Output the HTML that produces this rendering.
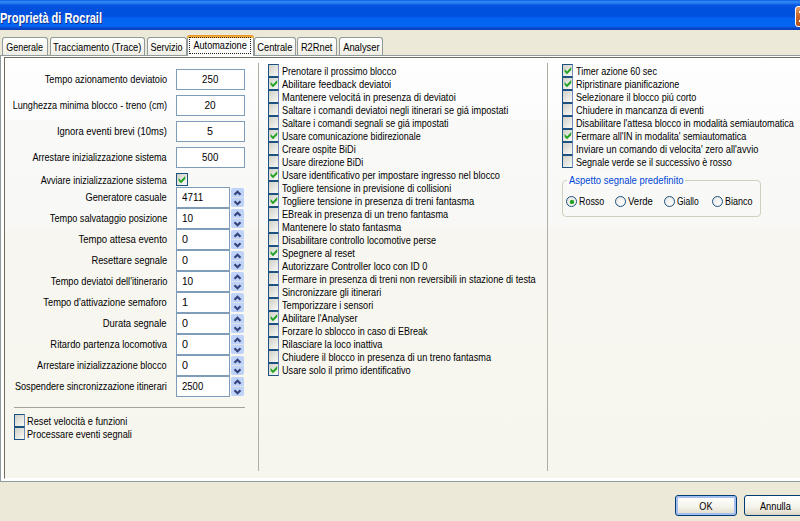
<!DOCTYPE html>
<html lang="it"><head><meta charset="utf-8"><title>Proprietà di Rocrail</title>
<style>
html,body{margin:0;padding:0}
body{width:800px;height:521px;overflow:hidden;background:#ECE9D8;position:relative;font-family:"Liberation Sans",sans-serif;font-size:11px;color:#000}
.abs,.t,.cb,.f,.sp,.tab,.lbl{position:absolute;box-sizing:border-box}
.title{left:0;top:0;width:800px;height:30px;background:linear-gradient(to bottom,#0B5BE0 0px,#2C84F5 1.5px,#2A80F3 3px,#0855E1 5px,#0051DE 9px,#0051DE 16px,#0462F0 18.5px,#0566F4 26px,#0849CA 28px,#0A3DB8 30px)}
.title span{position:absolute;left:-0.5px;top:9.5px;font-size:14px;line-height:16px;font-weight:bold;color:#fff;text-shadow:1px 1px 0 #0F2C8C;white-space:nowrap;transform:scaleX(var(--s,1));transform-origin:0 0}
.t{white-space:nowrap;line-height:13px;height:13px;transform:scaleX(var(--s,1));transform-origin:0 0}
.lbl{white-space:nowrap;line-height:13px;height:13px;text-align:right;right:633px;transform:scaleX(var(--s,1));transform-origin:100% 0}
.c{display:inline-block;white-space:nowrap;transform:scaleX(var(--s,1));transform-origin:50% 50%}
.l{display:inline-block;white-space:nowrap;transform:scaleX(var(--s,1));transform-origin:0 50%}
.page{left:0;top:55px;width:820px;height:427px;background:#fff;border:1px solid #919B9C}
.inner{left:4px;top:57px;width:820px;height:422px;border:1px solid #6E6C5E;border-bottom-color:#fff;background:linear-gradient(to bottom,#FEFEFE 0px,#FCFCFC 60px,#F9F9F8 64px,#F8F8F6 165px,#F7F6F0 175px,#F7F6EE 423px)}
.cb{width:11px;height:13px;border:1px solid #1C5180;border-right:1px solid rgba(40,80,150,.62);background:#fff linear-gradient(135deg,#D0D0C9 0%,#E6E6E0 40%,#FDFDFC 85%) 0 0/13px 13px no-repeat}
.cb.full{width:12px;border-right:1px solid #1C5180}
.cb svg{position:absolute;left:-1px;top:-1px}
.f{border:1px solid #7F9DB9;background:#fff;display:flex;align-items:center;justify-content:center;padding-bottom:1px}
.sf{justify-content:flex-start;padding-left:5px}
.tab{top:37px;height:18px;border:1px solid #919B9C;border-bottom:none;border-radius:3px 3px 0 0;background:linear-gradient(to bottom,#FFFFFF 0%,#F7F6F0 60%,#EFEEE4 100%);display:flex;align-items:center;justify-content:center;padding-top:1px}
.tab.sel{top:35px;height:21px;background:#FCFCFB;border-top:none;z-index:3;padding-top:0;padding-bottom:1px}
.tab.sel:before{content:"";position:absolute;left:-1px;right:-1px;top:0;height:3px;background:linear-gradient(to bottom,#E68B2C,#FFC73C);border-radius:3px 3px 0 0}
.sp{width:13px;background:#BFD2F8;border-radius:2px}
.sp svg{position:absolute;left:0;top:0}
.vsep{width:1px;background:#B0AEA2}
.btn{border:1px solid #003C74;border-radius:3px;background:linear-gradient(to bottom,#FFFFFF 0%,#F5F4EC 55%,#E3DFD0 90%,#D6D0C0 100%);display:flex;align-items:center;justify-content:center}
.rad{width:11px;height:11px;border-radius:50%;border:1px solid #1C5180;background:radial-gradient(circle at 65% 65%,#fff 0%,#E2E2DC 100%)}
</style></head><body>

<div class="abs title"><span style="--s:0.7897">Proprietà di Rocrail</span></div>
<div class="abs" style="left:795px;top:6px;width:12px;height:21px;border:1px solid #fff;border-radius:3px;background:linear-gradient(to bottom,#E2A066 0%,#CE6A30 40%,#B5521C 100%)"></div>
<div class="abs" style="left:799px;top:11px;width:4px;height:2px;background:#fff"></div><div class="abs" style="left:799px;top:20px;width:4px;height:2px;background:#fff"></div>
<div class="abs page"></div>
<div class="abs inner"></div>
<div class="tab" style="left:2px;width:46px"><span class="c" style="--s:0.8119">Generale</span></div>
<div class="tab" style="left:50px;width:95px"><span class="c" style="--s:0.8483">Tracciamento (Trace)</span></div>
<div class="tab" style="left:147px;width:40px"><span class="c" style="--s:0.8179">Servizio</span></div>
<div class="tab sel" style="left:187px;width:67px"><span class="c" style="--s:0.8315">Automazione</span></div>
<div class="tab" style="left:254px;width:42px"><span class="c" style="--s:0.8418">Centrale</span></div>
<div class="tab" style="left:297px;width:40px"><span class="c" style="--s:0.8446">R2Rnet</span></div>
<div class="tab" style="left:339px;width:44px"><span class="c" style="--s:0.8529">Analyser</span></div>
<div class="abs" style="left:189px;top:37px;width:62px;height:17px;border:1px dotted #222;z-index:4"></div>
<div class="lbl" style="top:73px;--s:0.8375">Tempo azionamento deviatoio</div>
<div class="f" style="left:176px;top:69px;width:69px;height:21px"><span class="c" style="--s:0.8824">250</span></div>
<div class="lbl" style="top:99px;--s:0.8253">Lunghezza minima blocco - treno (cm)</div>
<div class="f" style="left:176px;top:95px;width:69px;height:21px"><span class="c" style="--s:0.9143">20</span></div>
<div class="lbl" style="top:125px;--s:0.8601">Ignora eventi brevi (10ms)</div>
<div class="f" style="left:176px;top:121px;width:69px;height:21px"><span class="c" style="--s:0.9796">5</span></div>
<div class="lbl" style="top:151px;--s:0.8249">Arrestare inizializzazione sistema</div>
<div class="f" style="left:176px;top:147px;width:69px;height:21px"><span class="c" style="--s:0.8824">500</span></div>
<div class="lbl" style="top:174px;--s:0.8198">Avviare inizializzazione sistema</div>
<div class="cb full" style="left:176px;top:173px"><svg width="13" height="13" viewBox="0 0 13 13"><path d="M2.6 5 L5 7.4 L9.2 3 L9.2 6 L5 10.2 L2.6 7.8 Z" fill="#21A121"/></svg></div>
<div class="lbl" style="top:191px;--s:0.8398">Generatore casuale</div>
<div class="f sf" style="left:176px;top:187px;width:54px;height:21px"><span class="l" style="--s:0.8919">4711</span></div>
<div class="sp" style="left:231px;top:188px;height:19px"><svg width="13" height="19" viewBox="0 0 13 19"><rect x="0" y="9.2" width="13" height="0.8" fill="#E4E6E0"/><path d="M3.5 6.8 L6.5 3.8 L9.5 6.8 M3.5 13.2 L6.5 16.2 L9.5 13.2" fill="none" stroke="#34447C" stroke-width="2.2"/></svg></div>
<div class="lbl" style="top:212px;--s:0.8311">Tempo salvataggio posizione</div>
<div class="f sf" style="left:176px;top:208px;width:54px;height:21px"><span class="l" style="--s:0.9143">10</span></div>
<div class="sp" style="left:231px;top:209px;height:19px"><svg width="13" height="19" viewBox="0 0 13 19"><rect x="0" y="9.2" width="13" height="0.8" fill="#E4E6E0"/><path d="M3.5 6.8 L6.5 3.8 L9.5 6.8 M3.5 13.2 L6.5 16.2 L9.5 13.2" fill="none" stroke="#34447C" stroke-width="2.2"/></svg></div>
<div class="lbl" style="top:233px;--s:0.8681">Tempo attesa evento</div>
<div class="f sf" style="left:176px;top:229px;width:54px;height:21px"><span class="l" style="--s:0.9796">0</span></div>
<div class="sp" style="left:231px;top:230px;height:19px"><svg width="13" height="19" viewBox="0 0 13 19"><rect x="0" y="9.2" width="13" height="0.8" fill="#E4E6E0"/><path d="M3.5 6.8 L6.5 3.8 L9.5 6.8 M3.5 13.2 L6.5 16.2 L9.5 13.2" fill="none" stroke="#34447C" stroke-width="2.2"/></svg></div>
<div class="lbl" style="top:254px;--s:0.8501">Resettare segnale</div>
<div class="f sf" style="left:176px;top:250px;width:54px;height:21px"><span class="l" style="--s:0.9796">0</span></div>
<div class="sp" style="left:231px;top:251px;height:19px"><svg width="13" height="19" viewBox="0 0 13 19"><rect x="0" y="9.2" width="13" height="0.8" fill="#E4E6E0"/><path d="M3.5 6.8 L6.5 3.8 L9.5 6.8 M3.5 13.2 L6.5 16.2 L9.5 13.2" fill="none" stroke="#34447C" stroke-width="2.2"/></svg></div>
<div class="lbl" style="top:275px;--s:0.8422">Tempo deviatoi dell'itinerario</div>
<div class="f sf" style="left:176px;top:271px;width:54px;height:21px"><span class="l" style="--s:0.9143">10</span></div>
<div class="sp" style="left:231px;top:272px;height:19px"><svg width="13" height="19" viewBox="0 0 13 19"><rect x="0" y="9.2" width="13" height="0.8" fill="#E4E6E0"/><path d="M3.5 6.8 L6.5 3.8 L9.5 6.8 M3.5 13.2 L6.5 16.2 L9.5 13.2" fill="none" stroke="#34447C" stroke-width="2.2"/></svg></div>
<div class="lbl" style="top:296px;--s:0.8471">Tempo d'attivazione semaforo</div>
<div class="f sf" style="left:176px;top:292px;width:54px;height:21px"><span class="l" style="--s:0.9796">1</span></div>
<div class="sp" style="left:231px;top:293px;height:19px"><svg width="13" height="19" viewBox="0 0 13 19"><rect x="0" y="9.2" width="13" height="0.8" fill="#E4E6E0"/><path d="M3.5 6.8 L6.5 3.8 L9.5 6.8 M3.5 13.2 L6.5 16.2 L9.5 13.2" fill="none" stroke="#34447C" stroke-width="2.2"/></svg></div>
<div class="lbl" style="top:317px;--s:0.8551">Durata segnale</div>
<div class="f sf" style="left:176px;top:313px;width:54px;height:21px"><span class="l" style="--s:0.9796">0</span></div>
<div class="sp" style="left:231px;top:314px;height:19px"><svg width="13" height="19" viewBox="0 0 13 19"><rect x="0" y="9.2" width="13" height="0.8" fill="#E4E6E0"/><path d="M3.5 6.8 L6.5 3.8 L9.5 6.8 M3.5 13.2 L6.5 16.2 L9.5 13.2" fill="none" stroke="#34447C" stroke-width="2.2"/></svg></div>
<div class="lbl" style="top:338px;--s:0.8513">Ritardo partenza locomotiva</div>
<div class="f sf" style="left:176px;top:334px;width:54px;height:21px"><span class="l" style="--s:0.9796">0</span></div>
<div class="sp" style="left:231px;top:335px;height:19px"><svg width="13" height="19" viewBox="0 0 13 19"><rect x="0" y="9.2" width="13" height="0.8" fill="#E4E6E0"/><path d="M3.5 6.8 L6.5 3.8 L9.5 6.8 M3.5 13.2 L6.5 16.2 L9.5 13.2" fill="none" stroke="#34447C" stroke-width="2.2"/></svg></div>
<div class="lbl" style="top:359px;--s:0.8268">Arrestare inizializzazione blocco</div>
<div class="f sf" style="left:176px;top:355px;width:54px;height:21px"><span class="l" style="--s:0.9796">0</span></div>
<div class="sp" style="left:231px;top:356px;height:19px"><svg width="13" height="19" viewBox="0 0 13 19"><rect x="0" y="9.2" width="13" height="0.8" fill="#E4E6E0"/><path d="M3.5 6.8 L6.5 3.8 L9.5 6.8 M3.5 13.2 L6.5 16.2 L9.5 13.2" fill="none" stroke="#34447C" stroke-width="2.2"/></svg></div>
<div class="lbl" style="top:380px;--s:0.8308">Sospendere sincronizzazione itinerari</div>
<div class="f sf" style="left:176px;top:376px;width:54px;height:21px"><span class="l" style="--s:0.8659">2500</span></div>
<div class="sp" style="left:231px;top:377px;height:19px"><svg width="13" height="19" viewBox="0 0 13 19"><rect x="0" y="9.2" width="13" height="0.8" fill="#E4E6E0"/><path d="M3.5 6.8 L6.5 3.8 L9.5 6.8 M3.5 13.2 L6.5 16.2 L9.5 13.2" fill="none" stroke="#34447C" stroke-width="2.2"/></svg></div>
<div class="abs" style="left:14px;top:407px;width:231px;height:1px;background:#A5A397"></div>
<div class="cb" style="left:14px;top:414px"></div><div class="t" style="left:26.6px;top:415px;--s:0.8412">Reset velocità e funzioni</div>
<div class="cb" style="left:14px;top:427px"></div><div class="t" style="left:26.6px;top:428px;--s:0.8320">Processare eventi segnali</div>
<div class="abs vsep" style="left:258px;top:63px;height:408px"></div>
<div class="abs vsep" style="left:547px;top:63px;height:408px"></div>
<div class="cb" style="left:268px;top:64px"></div><div class="t" style="left:281.8px;top:65px;--s:0.8228">Prenotare il prossimo blocco</div>
<div class="cb" style="left:268px;top:77px"><svg width="13" height="13" viewBox="0 0 13 13"><path d="M2.6 5 L5 7.4 L9.2 3 L9.2 6 L5 10.2 L2.6 7.8 Z" fill="#21A121"/></svg></div><div class="t" style="left:281.8px;top:78px;--s:0.8503">Abilitare feedback deviatoi</div>
<div class="cb" style="left:268px;top:90px"></div><div class="t" style="left:281.8px;top:91px;--s:0.8454">Mantenere velocitá in presenza di deviatoi</div>
<div class="cb" style="left:268px;top:103px"></div><div class="t" style="left:281.8px;top:104px;--s:0.8351">Saltare i comandi deviatoi negli itinerari se giá impostati</div>
<div class="cb" style="left:268px;top:116px"></div><div class="t" style="left:281.8px;top:117px;--s:0.8227">Saltare i comandi segnali se giá impostati</div>
<div class="cb" style="left:268px;top:129px"><svg width="13" height="13" viewBox="0 0 13 13"><path d="M2.6 5 L5 7.4 L9.2 3 L9.2 6 L5 10.2 L2.6 7.8 Z" fill="#21A121"/></svg></div><div class="t" style="left:281.8px;top:130px;--s:0.8130">Usare comunicazione bidirezionale</div>
<div class="cb" style="left:268px;top:142px"></div><div class="t" style="left:281.8px;top:143px;--s:0.8256">Creare ospite BiDi</div>
<div class="cb" style="left:268px;top:155px"></div><div class="t" style="left:281.8px;top:156px;--s:0.8098">Usare direzione BiDi</div>
<div class="cb" style="left:268px;top:168px"><svg width="13" height="13" viewBox="0 0 13 13"><path d="M2.6 5 L5 7.4 L9.2 3 L9.2 6 L5 10.2 L2.6 7.8 Z" fill="#21A121"/></svg></div><div class="t" style="left:281.8px;top:169px;--s:0.8368">Usare identificativo per impostare ingresso nel blocco</div>
<div class="cb" style="left:268px;top:181px"></div><div class="t" style="left:281.8px;top:182px;--s:0.8285">Togliere tensione in previsione di collisioni</div>
<div class="cb" style="left:268px;top:194px"><svg width="13" height="13" viewBox="0 0 13 13"><path d="M2.6 5 L5 7.4 L9.2 3 L9.2 6 L5 10.2 L2.6 7.8 Z" fill="#21A121"/></svg></div><div class="t" style="left:281.8px;top:195px;--s:0.8450">Togliere tensione in presenza di treni fantasma</div>
<div class="cb" style="left:268px;top:207px"></div><div class="t" style="left:281.8px;top:208px;--s:0.8337">EBreak in presenza di un treno fantasma</div>
<div class="cb" style="left:268px;top:220px"></div><div class="t" style="left:281.8px;top:221px;--s:0.8550">Mantenere lo stato fantasma</div>
<div class="cb" style="left:268px;top:233px"></div><div class="t" style="left:281.8px;top:234px;--s:0.8324">Disabilitare controllo locomotive perse</div>
<div class="cb" style="left:268px;top:246px"><svg width="13" height="13" viewBox="0 0 13 13"><path d="M2.6 5 L5 7.4 L9.2 3 L9.2 6 L5 10.2 L2.6 7.8 Z" fill="#21A121"/></svg></div><div class="t" style="left:281.8px;top:247px;--s:0.8400">Spegnere al reset</div>
<div class="cb" style="left:268px;top:259px"></div><div class="t" style="left:281.8px;top:260px;--s:0.8376">Autorizzare Controller loco con ID 0</div>
<div class="cb" style="left:268px;top:272px"></div><div class="t" style="left:281.8px;top:273px;--s:0.8382">Fermare in presenza di treni non reversibili in stazione di testa</div>
<div class="cb" style="left:268px;top:285px"></div><div class="t" style="left:281.8px;top:286px;--s:0.8279">Sincronizzare gli itinerari</div>
<div class="cb" style="left:268px;top:298px"></div><div class="t" style="left:281.8px;top:299px;--s:0.8287">Temporizzare i sensori</div>
<div class="cb" style="left:268px;top:311px"><svg width="13" height="13" viewBox="0 0 13 13"><path d="M2.6 5 L5 7.4 L9.2 3 L9.2 6 L5 10.2 L2.6 7.8 Z" fill="#21A121"/></svg></div><div class="t" style="left:281.8px;top:312px;--s:0.8370">Abilitare l'Analyser</div>
<div class="cb" style="left:268px;top:324px"></div><div class="t" style="left:281.8px;top:325px;--s:0.8147">Forzare lo sblocco in caso di EBreak</div>
<div class="cb" style="left:268px;top:337px"></div><div class="t" style="left:281.8px;top:338px;--s:0.8297">Rilasciare la loco inattiva</div>
<div class="cb" style="left:268px;top:350px"></div><div class="t" style="left:281.8px;top:351px;--s:0.8337">Chiudere il blocco in presenza di un treno fantasma</div>
<div class="cb" style="left:268px;top:363px"><svg width="13" height="13" viewBox="0 0 13 13"><path d="M2.6 5 L5 7.4 L9.2 3 L9.2 6 L5 10.2 L2.6 7.8 Z" fill="#21A121"/></svg></div><div class="t" style="left:281.8px;top:364px;--s:0.8321">Usare solo il primo identificativo</div>
<div class="cb" style="left:562px;top:64px"><svg width="13" height="13" viewBox="0 0 13 13"><path d="M2.6 5 L5 7.4 L9.2 3 L9.2 6 L5 10.2 L2.6 7.8 Z" fill="#21A121"/></svg></div><div class="t" style="left:575.6px;top:65px;--s:0.8201">Timer azione 60 sec</div>
<div class="cb" style="left:562px;top:77px"><svg width="13" height="13" viewBox="0 0 13 13"><path d="M2.6 5 L5 7.4 L9.2 3 L9.2 6 L5 10.2 L2.6 7.8 Z" fill="#21A121"/></svg></div><div class="t" style="left:575.6px;top:78px;--s:0.8249">Ripristinare pianificazione</div>
<div class="cb" style="left:562px;top:90px"></div><div class="t" style="left:575.6px;top:91px;--s:0.8239">Selezionare il blocco piú corto</div>
<div class="cb" style="left:562px;top:103px"></div><div class="t" style="left:575.6px;top:104px;--s:0.8300">Chiudere in mancanza di eventi</div>
<div class="cb" style="left:562px;top:116px"></div><div class="t" style="left:575.6px;top:117px;--s:0.8280">Disabilitare l'attesa blocco in modalità semiautomatica</div>
<div class="cb" style="left:562px;top:129px"><svg width="13" height="13" viewBox="0 0 13 13"><path d="M2.6 5 L5 7.4 L9.2 3 L9.2 6 L5 10.2 L2.6 7.8 Z" fill="#21A121"/></svg></div><div class="t" style="left:575.6px;top:130px;--s:0.8225">Fermare all'IN in modalita' semiautomatica</div>
<div class="cb" style="left:562px;top:142px"></div><div class="t" style="left:575.6px;top:143px;--s:0.8406">Inviare un comando di velocita' zero all'avvio</div>
<div class="cb" style="left:562px;top:155px"></div><div class="t" style="left:575.6px;top:156px;--s:0.8225">Segnale verde se il successivo è rosso</div>
<div class="abs" style="left:562px;top:180px;width:199px;height:37px;border:1px solid #D0D0BF;border-radius:4px"></div>
<div class="abs" style="left:567px;top:174px;width:118px;height:13px;background:#FAFAF8"></div>
<div class="t" style="left:569px;top:174px;color:#0046D5;--s:0.8595">Aspetto segnale predefinito</div>
<div class="abs rad" style="left:566px;top:196px"><div class="abs" style="left:2.5px;top:2.5px;width:4px;height:4px;border-radius:50%;background:#21A121;box-shadow:0 0 1px #21A121"></div></div>
<div class="t" style="left:579.3px;top:195px;--s:0.8096">Rosso</div>
<div class="abs rad" style="left:615px;top:196px"></div>
<div class="t" style="left:627.5px;top:195px;--s:0.8661">Verde</div>
<div class="abs rad" style="left:664px;top:196px"></div>
<div class="t" style="left:677px;top:195px;--s:0.7680">Giallo</div>
<div class="abs rad" style="left:712px;top:196px"></div>
<div class="t" style="left:725px;top:195px;--s:0.8175">Bianco</div>
<div class="abs btn" style="left:675px;top:495px;width:62px;height:21px;box-shadow:inset 0 0 0 2px #A4BEF0"><span class="c" style="--s:0.8299">OK</span></div>
<div class="abs btn" style="left:744px;top:495px;width:62px;height:21px"><span class="c" style="--s:0.8419">Annulla</span></div>
</body></html>
